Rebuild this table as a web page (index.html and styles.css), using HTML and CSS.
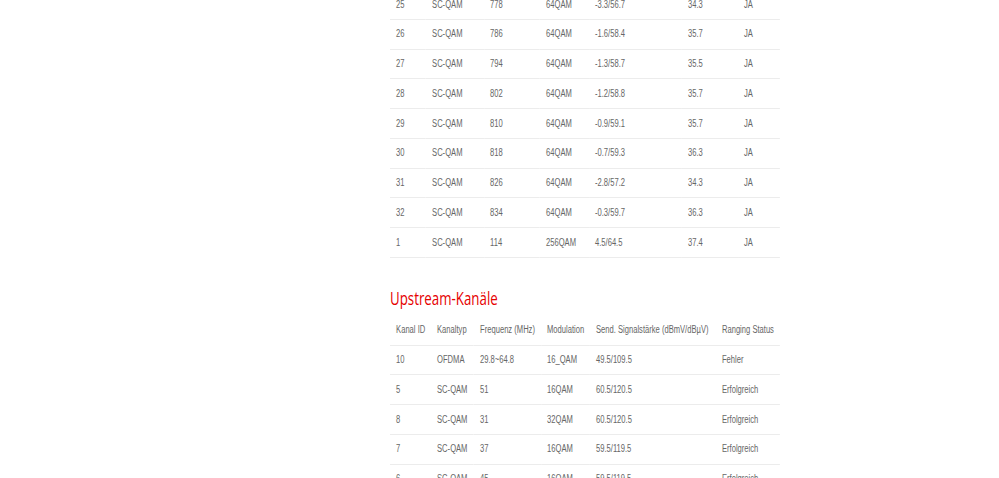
FILE: index.html
```html
<!DOCTYPE html>
<html>
<head>
<meta charset="utf-8">
<link rel="stylesheet" href="styles.css">
</head>
<body>
<div class="page">
  <table class="tbl down">
    <colgroup>
      <col class="c1"><col class="c2"><col class="c3"><col class="c4"><col class="c5"><col class="c6"><col class="c7">
    </colgroup>
    <tbody>
      <tr><td>25</td><td>SC-QAM</td><td>778</td><td>64QAM</td><td>-3.3/56.7</td><td>34.3</td><td>JA</td></tr>
      <tr><td>26</td><td>SC-QAM</td><td>786</td><td>64QAM</td><td>-1.6/58.4</td><td>35.7</td><td>JA</td></tr>
      <tr><td>27</td><td>SC-QAM</td><td>794</td><td>64QAM</td><td>-1.3/58.7</td><td>35.5</td><td>JA</td></tr>
      <tr><td>28</td><td>SC-QAM</td><td>802</td><td>64QAM</td><td>-1.2/58.8</td><td>35.7</td><td>JA</td></tr>
      <tr><td>29</td><td>SC-QAM</td><td>810</td><td>64QAM</td><td>-0.9/59.1</td><td>35.7</td><td>JA</td></tr>
      <tr><td>30</td><td>SC-QAM</td><td>818</td><td>64QAM</td><td>-0.7/59.3</td><td>36.3</td><td>JA</td></tr>
      <tr><td>31</td><td>SC-QAM</td><td>826</td><td>64QAM</td><td>-2.8/57.2</td><td>34.3</td><td>JA</td></tr>
      <tr><td>32</td><td>SC-QAM</td><td>834</td><td>64QAM</td><td>-0.3/59.7</td><td>36.3</td><td>JA</td></tr>
      <tr><td>1</td><td>SC-QAM</td><td>114</td><td>256QAM</td><td>4.5/64.5</td><td>37.4</td><td>JA</td></tr>
    </tbody>
  </table>

  <h2 class="section-title">Upstream-Kanäle</h2>

  <table class="tbl up">
    <colgroup>
      <col class="u1"><col class="u2"><col class="u3"><col class="u4"><col class="u5"><col class="u6">
    </colgroup>
    <thead>
      <tr><th>Kanal ID</th><th>Kanaltyp</th><th>Frequenz (MHz)</th><th>Modulation</th><th>Send. Signalstärke (dBmV/dBµV)</th><th>Ranging Status</th></tr>
    </thead>
    <tbody>
      <tr><td>10</td><td>OFDMA</td><td>29.8~64.8</td><td>16_QAM</td><td>49.5/109.5</td><td>Fehler</td></tr>
      <tr><td>5</td><td>SC-QAM</td><td>51</td><td>16QAM</td><td>60.5/120.5</td><td>Erfolgreich</td></tr>
      <tr><td>8</td><td>SC-QAM</td><td>31</td><td>32QAM</td><td>60.5/120.5</td><td>Erfolgreich</td></tr>
      <tr><td>7</td><td>SC-QAM</td><td>37</td><td>16QAM</td><td>59.5/119.5</td><td>Erfolgreich</td></tr>
      <tr><td>6</td><td>SC-QAM</td><td>45</td><td>16QAM</td><td>59.5/119.5</td><td>Erfolgreich</td></tr>
    </tbody>
  </table>
</div>
</body>
</html>
```

FILE: styles.css
```css
html, body {
  margin: 0;
  padding: 0;
  background: #ffffff;
  overflow: hidden;
}

/* The captured page is rendered horizontally condensed */
.page {
  width: 513px;
  margin-left: 390px;
  margin-top: -10px;
  transform: scaleX(0.76);
  transform-origin: 0 0;
  font-family: "Liberation Sans", Arial, sans-serif;
  font-size: 10px;
  color: #666666;
}

.tbl {
  width: 100%;
  border-collapse: collapse;
  table-layout: fixed;
}

.c1 { width: 9.23%; }
.c2 { width: 14.87%; }
.c3 { width: 14.36%; }
.c4 { width: 12.56%; }
.c5 { width: 23.85%; }
.c6 { width: 14.36%; }
.c7 { width: 10.77%; }

.u1 { width: 10.51%; }
.u2 { width: 11.03%; }
.u3 { width: 17.18%; }
.u4 { width: 12.56%; }
.u5 { width: 32.31%; }
.u6 { width: 16.41%; }

.tbl td, .tbl th {
  padding: 7.5px 8px 6.5px;
  line-height: 14.75px;
  text-align: left;
  font-weight: normal;
  white-space: nowrap;
  vertical-align: middle;
}

.tbl tbody td {
  border-bottom: 1px solid #ececec;
}

.tbl thead th {
  border-bottom: 1px solid #ececec;
}

.section-title {
  margin: 28px 0 0 0;
  font-family: "Open Sans", sans-serif;
  font-weight: normal;
  font-size: 17.5px;
  line-height: 24px;
  color: #e60000;
}

.up {
  margin-top: 6px;
}
```
